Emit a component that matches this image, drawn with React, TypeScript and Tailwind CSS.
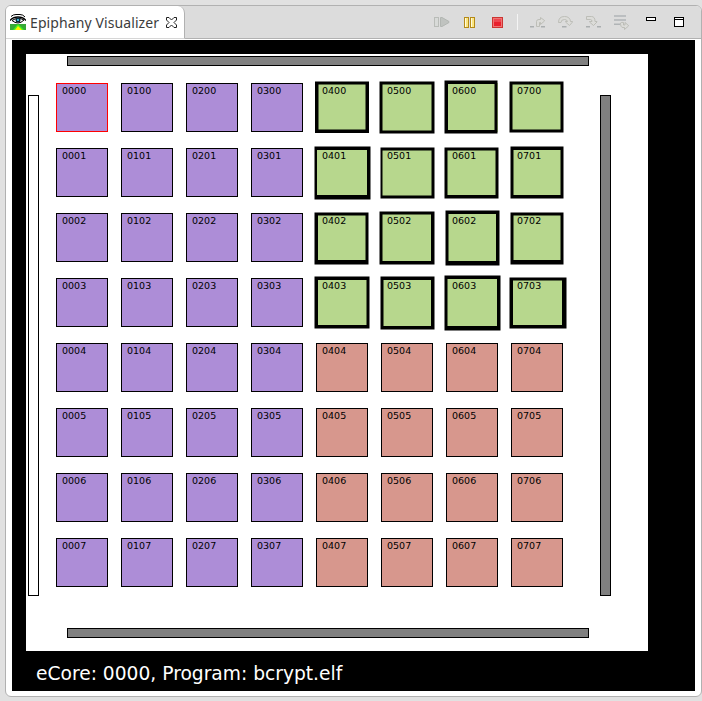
import React from "react";

type Edges = [number, number, number, number];

// Frame of each busy core: outer then inner edges, as left, top, right, bottom.
const busy: Record<string, [Edges, Edges]> = {
  "0400": [[-1, -1.5, 53, 50], [2.5, 1.5, 49.5, 46.5]],
  "0500": [[-1.5, -1.5, 53.5, 50.5], [1.5, 1.5, 50.5, 47.5]],
  "0600": [[-1.5, -2.5, 51.5, 50.5], [2, 1, 48.5, 47]],
  "0700": [[-1.5, -1.5, 52.5, 49.5], [1.5, 1.5, 49.5, 46.5]],
  "0401": [[-1.5, -1.5, 54.5, 51.5], [1, 2, 51, 47]],
  "0501": [[-0.5, -0.5, 53.5, 50.5], [1.5, 2.5, 50.5, 47.5]],
  "0601": [[-1.5, -0.5, 52.5, 50.5], [1.5, 2.5, 49.5, 47]],
  "0701": [[-0.5, -1.5, 52.5, 50.5], [2.5, 2, 49.5, 47]],
  "0402": [[-1.5, -0.5, 52.5, 51.5], [2, 2.5, 49.5, 47]],
  "0502": [[-1.5, -1.5, 53.5, 51.5], [1.5, 1.5, 50, 48]],
  "0602": [[-0.5, -2.5, 53.5, 52.5], [2.5, 1, 50, 48]],
  "0702": [[-0.5, -0.5, 52.5, 51.5], [2.5, 2.5, 49.5, 47]],
  "0403": [[-1.5, -1.5, 53.5, 50.5], [2, 2, 50.5, 47]],
  "0503": [[-0.5, -1.5, 53.5, 51.5], [2.5, 2, 50, 48]],
  "0603": [[-1.5, -2.5, 54.5, 52.5], [1.5, 1, 51, 48]],
  "0703": [[-1.5, -0.5, 55.5, 50.5], [2, 2.5, 51, 47]],
};

const ring = ([a, b]: [Edges, Edges]) =>
  [a, b].map(([l, t, r, d]) => `M${l} ${t}H${r}V${d}H${l}Z`).join("");

function Core({ col, row }: { col: number; row: number }) {
  const id = `0${col}0${row}`;
  const frame = busy[id];
  const look = frame
    ? "bg-[#b7d78d]"
    : col < 4
      ? id === "0000"
        ? "bg-[#ad8dd7] border border-[#ff0000]"
        : "bg-[#ad8dd7] border border-black"
      : "bg-[#d7978d] border border-black";
  return (
    <div className={`relative h-[49px] w-[52px] ${look}`}>
      {frame && (
        <svg className="absolute inset-0 overflow-visible" width="52" height="49">
          <path d={ring(frame)} fillRule="evenodd" />
        </svg>
      )}
      <div
        className={`relative text-[9.5px] leading-[12px] ${frame ? "pl-[6px] pt-[2px]" : "pl-[5px] pt-px"}`}
      >
        {id}
      </div>
    </div>
  );
}

function Icon({ children, className = "" }: { children: React.ReactNode; className?: string }) {
  return (
    <svg
      width="16"
      height="16"
      viewBox="0 0 16 16"
      fill="none"
      className={`shrink-0 overflow-visible ${className}`}
    >
      {children}
    </svg>
  );
}

function Toolbar() {
  return (
    <div className="flex h-4">
      <Icon>
        <rect x=".5" y="3.5" width="4" height="9" fill="#d8dad8" stroke="#b9bcb8" />
        <path d="M6.5 3.5v9h1.5l7-4v-1l-7-4z" fill="#c0c3c0" stroke="#b2b6b2" />
      </Icon>
      <Icon className="ml-3">
        <rect x="2.5" y="3.5" width="4" height="10" fill="#fbe681" stroke="#b58a18" />
        <rect x="8.5" y="3.5" width="4" height="10" fill="#fbe681" stroke="#b58a18" />
        <path d="M3.5 4v9M9.5 4v9" stroke="#fffbe0" />
      </Icon>
      <Icon className="ml-3">
        <rect x="2.5" y="3.5" width="10" height="10" fill="#e9202d" stroke="#cc3532" />
        <rect x="3.5" y="4.5" width="8" height="8" stroke="#f07474" />
        <path d="M4 5h7v3H4z" fill="#ee4650" />
      </Icon>
      <div className="ml-[11px] h-4 w-px bg-[#f4f4f4]" />
      <Icon className="ml-3">
        <path d="M0 12.75h4M11 12.75h4" stroke="#aaaeaf" strokeWidth="1.5" />
        <path
          d="M6.5 12.5V7.5Q6.5 5.500 9 5.500H10.500V3.500L14.500 6.500V7L10.500 10.500V8.500H9.500V12.500Z"
          fill="#dcdcd9"
          stroke="#b9bab3"
          strokeWidth=".9"
        />
      </Icon>
      <Icon className="ml-3">
        <path d="M4 12.750h4.500" stroke="#aaaeaf" strokeWidth="1.500" />
        <path
          d="M.5 8.500Q.5 2.500 6.500 2.500Q12 2.500 12.500 7.500H14.500V8L11.500 11.500L7.500 8V7.500H9.500Q9 5.500 6.500 5.500Q3 5.500 3 8.500Z"
          fill="#dcdcd9"
          stroke="#b9bab3"
          strokeWidth=".9"
        />
      </Icon>
      <Icon className="ml-3">
        <path d="M0 12.750h4M11 12.750h4" stroke="#aaaeaf" strokeWidth="1.500" />
        <path
          d="M.5 2.500H5.500Q9 2.500 9 7.500H11V8L7.500 11.500L3.500 8V7.500H6Q6 5.500 4.500 5.500H.5Z"
          fill="#dcdcd9"
          stroke="#b9bab3"
          strokeWidth=".9"
        />
      </Icon>
      <Icon className="ml-3">
        <path d="M0 2h12M0 6h12M0 10.250h6" stroke="#b0b4b6" strokeWidth="1.500" />
        <path
          d="M6.500 9Q7.500 8 9.500 8.500V11H11V8.500L14.500 11.500V12L10.500 15.500V13.500H9Q6.500 13.500 6.500 9Z"
          fill="#dcdcd9"
          stroke="#b9bab3"
          strokeWidth=".9"
        />
      </Icon>
      <Icon className="ml-4">
        <rect x=".5" y="3.500" width="9" height="3" fill="#fff" stroke="#000" />
      </Icon>
      <Icon className="ml-3">
        <rect x=".5" y="3.500" width="9" height="9" fill="#fff" stroke="#000" />
        <path d="M1 5.500h8" stroke="#000" />
      </Icon>
    </div>
  );
}

function EyeIcon() {
  return (
    <svg width="16" height="16" viewBox="0 0 16 16" className="shrink-0">
      <path d="M0 10h16v6H0z" fill="#36a936" />
      <path d="m8 10-5 6h11z" fill="#45f51b" />
      <path d="m8 12-3 4h7z" fill="#fff200" />
      <path d="M1 2.500Q3 .5 6 .5h4q3 0 5 2.500" fill="none" stroke="#000" />
      <path d="M0 6.500Q3 3 8 3t8 3.500" fill="none" stroke="#000" strokeWidth="1.300" />
      <path d="M2 6.500Q8 2.500 14 6 11 9 8 9T2 6.500z" fill="#fff" stroke="#000" />
      <circle cx="8" cy="6" r="2.500" fill="#0d2a3c" />
      <path d="M7 5h2v2H7z" fill="#3ab7d4" />
    </svg>
  );
}

export default function App() {
  return (
    <div className="h-[701px] w-[702px] overflow-hidden bg-[#e1e1e1] pl-[5px] pt-[5px] font-['DejaVu_Sans',sans-serif] text-black">
      <div className="h-[692px] w-[697px] overflow-hidden rounded-[6px] border border-[#b1b1b1] bg-white">
        <div className="flex h-[33px] bg-[#dcdcdc]">
          <div className="flex h-[33px] w-[179px] rounded-tr-[7px] border-b border-r border-b-[#d6d6d6] border-r-[#b1b1b1] bg-white pl-1 pt-2">
            <EyeIcon />
            <span className="ml-1 w-[131px] whitespace-nowrap font-['Noto_Sans',sans-serif] text-[14px] leading-[18px] tracking-[0.1px] text-[#3c3c3c]">
              Epiphany Visualizer
            </span>
            <svg width="11" height="11" viewBox="0 0 11 11" className="ml-[5px] mt-[3px] shrink-0">
              <path
                d="M.5.500h2.500l2.500 2.500 2.500-2.500h2.500v2.500l-2.500 2.500 2.500 2.500v2.500h-2.500l-2.500-2.500-2.500 2.500h-2.500v-2.500l2.500-2.500-2.500-2.500z"
                fill="#fff"
                stroke="#222"
              />
            </svg>
          </div>
          <div className="flex flex-1 border-b border-[#b1b1b1] pl-[249px] pt-2">
            <Toolbar />
          </div>
        </div>
        <div className="ml-[6px] mt-px h-[651px] w-[683px] bg-black pl-[14px] pt-[14px]">
          <div className="h-[597px] w-[622px] bg-white pt-[2px]">
            <div className="ml-[41px] h-[10px] w-[522px] border border-black bg-[#808080]" />
            <div className="flex h-[530px]">
              <div className="ml-[2px] mt-[29px] h-[501px] w-[11px] border border-black bg-white" />
              <div className="ml-[17px] mt-[17px] grid h-[504px] w-[507px] grid-cols-8 gap-x-[13px] gap-y-[16px]">
                {Array.from({ length: 64 }, (_, i) => (
                  <Core key={i} col={i % 8} row={Math.floor(i / 8)} />
                ))}
              </div>
              <div className="ml-[37px] mt-[29px] h-[501px] w-[11px] border border-black bg-[#808080]" />
            </div>
            <div className="ml-[41px] mt-8 h-[10px] w-[522px] border border-black bg-[#808080]" />
          </div>
          <div className="ml-[10px] mt-[11px] whitespace-nowrap text-[18.67px] leading-[24px] text-white">
            eCore: 0000, Program: bcrypt.elf
          </div>
        </div>
      </div>
    </div>
  );
}
